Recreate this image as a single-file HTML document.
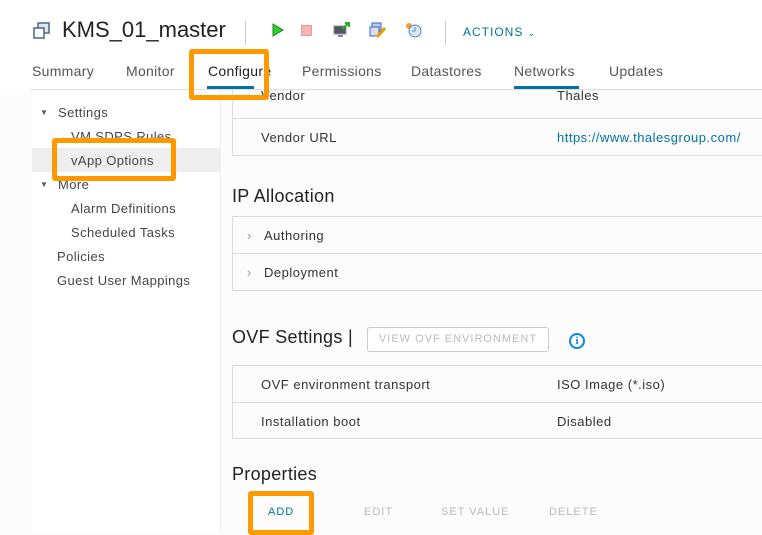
<!DOCTYPE html>
<html><head><meta charset="utf-8"><style>
*{margin:0;padding:0;box-sizing:border-box}
body{width:762px;height:533px;overflow:hidden;background:#fdfcfd;font-family:"Liberation Sans",sans-serif;color:#333;position:relative}
.a{position:absolute;white-space:nowrap}
.tab{position:absolute;top:63px;font-size:14px;color:#555;letter-spacing:0.3px}
.tree{position:absolute;font-size:13px;color:#444;letter-spacing:0.4px}
.row{position:absolute;left:232px;width:540px;border:1px solid #ddd;background:#fdfcfd}
.cell{position:absolute;font-size:13px;color:#333;letter-spacing:0.5px}
.ob{position:absolute;border:5px solid #f90;border-radius:3px}
.btn{position:absolute;top:506px;font-size:11px;letter-spacing:1px;color:#bbb}
</style></head><body>
<div class="a" style="left:0;top:0;width:762px;height:90px;background:#fff"></div>
<svg class="a" style="left:32px;top:21px" width="20" height="20" viewBox="0 0 20 20"><rect x="6" y="2" width="11" height="10" fill="#dfe8f0" stroke="#4a6a88" stroke-width="1.5"/><rect x="2" y="7" width="10" height="10" fill="#fff" stroke="#4a6a88" stroke-width="1.5"/></svg>
<div class="a" style="left:62px;top:17px;font-size:22px;color:#222">KMS_01_master</div>
<div class="a" style="left:245px;top:20px;width:1px;height:25px;background:#ccc"></div>
<svg class="a" style="left:272px;top:23px" width="12" height="14"><polygon points="1,1 11,7 1,13" fill="#3c3" stroke="#1a8a1a"/></svg>
<div class="a" style="left:301px;top:25px;width:11px;height:11px;background:#f5b5b5;border:1px solid #e99"></div>
<svg class="a" style="left:333px;top:22px" width="18" height="16"><rect x="1" y="4" width="12" height="8" fill="#556" stroke="#889"/><rect x="5" y="13" width="5" height="2" fill="#889"/><path d="M9 7 L16 1 M12 1 H16 V5" stroke="#2a2" stroke-width="2" fill="none"/></svg>
<svg class="a" style="left:369px;top:21px" width="18" height="18"><rect x="3" y="2" width="9" height="8" fill="#bcd" stroke="#36c"/><rect x="1" y="6" width="9" height="9" fill="#dde" stroke="#36c"/><path d="M8 16 L16 7" stroke="#e90" stroke-width="3"/></svg>
<svg class="a" style="left:404px;top:21px" width="18" height="18"><circle cx="5" cy="5" r="3" fill="#f93"/><circle cx="11" cy="10" r="6" fill="#dde8f5" stroke="#58b"/><path d="M11 6 V10 H8" stroke="#58b" fill="none"/></svg>
<div class="a" style="left:445px;top:20px;width:1px;height:25px;background:#ccc"></div>
<div class="a" style="left:463px;top:25px;font-size:12px;letter-spacing:1px;color:#0072a3">ACTIONS <span style="font-size:9px">&#8964;</span></div>
<div class="tab" style="left:32px">Summary</div>
<div class="tab" style="left:126px">Monitor</div>
<div class="tab" style="left:208px;color:#222">Configure</div>
<div class="tab" style="left:302px">Permissions</div>
<div class="tab" style="left:411px">Datastores</div>
<div class="tab" style="left:514px">Networks</div>
<div class="tab" style="left:609px">Updates</div>
<div class="a" style="left:32px;top:90px;width:189px;height:443px;background:#fff;border-right:1px solid #eee"></div>
<div class="a" style="left:32px;top:148px;width:189px;height:24px;background:#eee"></div>
<div class="tree" style="left:40px;top:108px;font-size:8px;color:#555">&#9660;</div>
<div class="tree" style="left:58px;top:105px">Settings</div>
<div class="tree" style="left:71px;top:129px">VM SDPS Rules</div>
<div class="tree" style="left:71px;top:153px">vApp Options</div>
<div class="tree" style="left:40px;top:180px;font-size:8px;color:#555">&#9660;</div>
<div class="tree" style="left:58px;top:177px">More</div>
<div class="tree" style="left:71px;top:201px">Alarm Definitions</div>
<div class="tree" style="left:71px;top:225px">Scheduled Tasks</div>
<div class="tree" style="left:57px;top:249px">Policies</div>
<div class="tree" style="left:57px;top:273px">Guest User Mappings</div>
<div class="row" style="top:80px;height:39px"></div>
<div class="row" style="top:118px;height:38px"></div>
<div class="cell" style="left:261px;top:88px">Vendor</div>
<div class="cell" style="left:557px;top:88px">Thales</div>
<div class="a" style="left:0;top:80px;width:762px;height:9px;background:#fff"></div>
<div class="a" style="left:30px;top:89px;width:732px;height:1px;background:#ddd"></div>
<div class="a" style="left:207px;top:86px;width:47px;height:3px;background:#0072a3"></div>
<div class="a" style="left:514px;top:86px;width:65px;height:3px;background:#0072a3"></div>
<div class="cell" style="left:261px;top:130px">Vendor URL</div>
<div class="cell" style="left:557px;top:130px;color:#0072a3">https://www.thalesgroup.com/</div>
<div class="a" style="left:232px;top:186px;font-size:18px;color:#222;letter-spacing:0.3px">IP Allocation</div>
<div class="row" style="top:216px;height:38px"></div>
<div class="row" style="top:253px;height:38px"></div>
<div class="cell" style="left:247px;top:228px;color:#999">&#8250;</div>
<div class="cell" style="left:264px;top:228px">Authoring</div>
<div class="cell" style="left:247px;top:265px;color:#999">&#8250;</div>
<div class="cell" style="left:264px;top:265px">Deployment</div>
<div class="a" style="left:232px;top:327px;font-size:18px;color:#222;letter-spacing:0.3px">OVF Settings |</div>
<div class="a" style="left:367px;top:327px;width:182px;height:25px;border:1px solid #ccc;border-radius:3px;font-size:11px;letter-spacing:1px;color:#bbb;text-align:center;line-height:23px;background:#fff">VIEW OVF ENVIRONMENT</div>
<div class="a" style="left:569px;top:333px;width:16px;height:16px;border:2px solid #0a8ad6;border-radius:50%;color:#0a8ad6;font-size:11px;font-weight:bold;text-align:center;line-height:12px;font-family:'Liberation Serif',serif">i</div>
<div class="row" style="top:365px;height:38px"></div>
<div class="row" style="top:402px;height:37px"></div>
<div class="cell" style="left:261px;top:377px">OVF environment transport</div>
<div class="cell" style="left:557px;top:377px">ISO Image (*.iso)</div>
<div class="cell" style="left:261px;top:414px">Installation boot</div>
<div class="cell" style="left:557px;top:414px">Disabled</div>
<div class="a" style="left:232px;top:464px;font-size:18px;color:#222;letter-spacing:0.3px">Properties</div>
<div class="btn" style="left:268px;color:#0072a3">ADD</div>
<div class="btn" style="left:364px">EDIT</div>
<div class="btn" style="left:441px">SET VALUE</div>
<div class="btn" style="left:549px">DELETE</div>
<div class="ob" style="left:189px;top:49px;width:80px;height:51px"></div>
<div class="ob" style="left:52px;top:138px;width:124px;height:43px"></div>
<div class="ob" style="left:248px;top:491px;width:66px;height:44px"></div>
</body></html>
